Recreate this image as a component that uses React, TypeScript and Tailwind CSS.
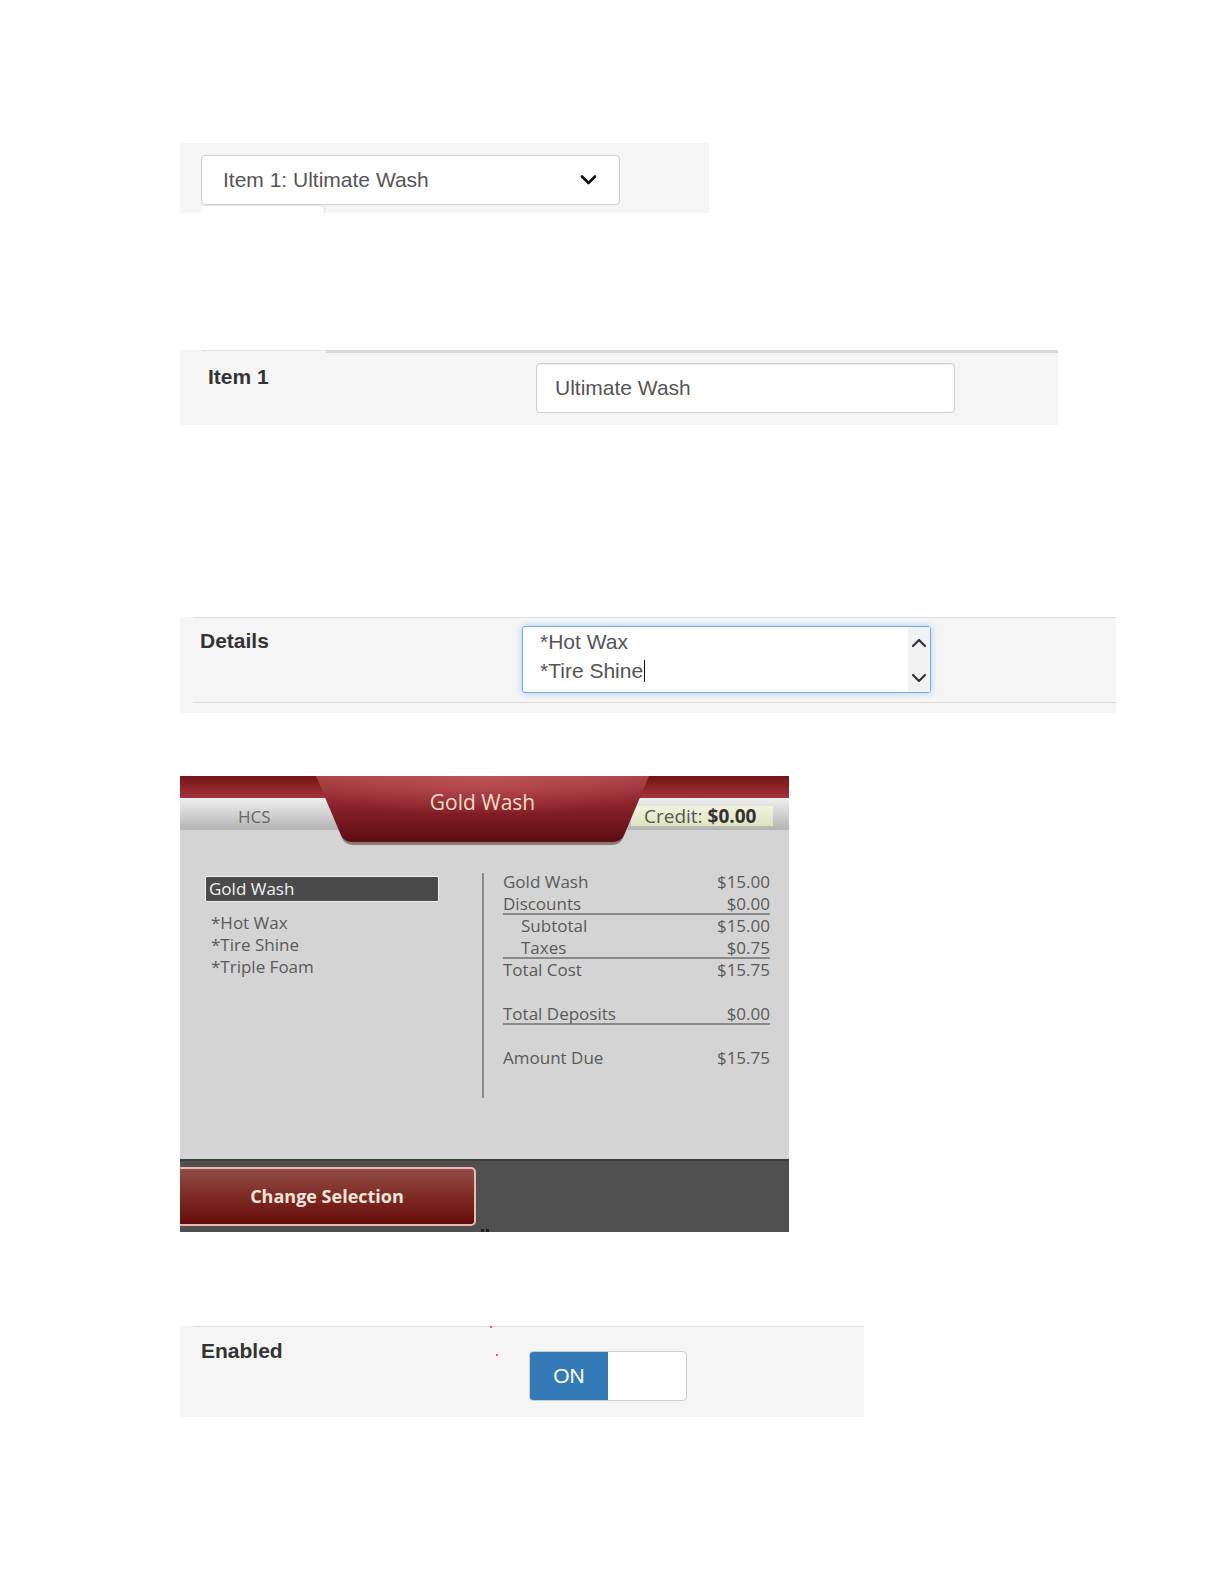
import React from 'react';

const formFont = { fontFamily: '"Liberation Sans", Arial, sans-serif' };
const kioskFont = { fontFamily: '"Open Sans", "DejaVu Sans", sans-serif' };

const SelectPanel = () => (
  <div className="h-[70px] w-[529px] bg-[#f5f5f5] pl-[21px] pt-[12px]" style={formFont}>
    <div className="flex h-[50px] w-[419px] items-center justify-between rounded-[4px] border border-[#cfcfcf] bg-white pl-[21px] pr-[22px] text-[21px] text-[#555]">
      <span>Item 1: Ultimate Wash</span>
      <svg width="17" height="12" viewBox="0 0 17 12" fill="none">
        <polyline points="2,2.5 8.5,9 15,2.5" stroke="#111" strokeWidth="2.6" strokeLinecap="round" strokeLinejoin="round" />
      </svg>
    </div>
    <div className="h-[8px] w-[124px] rounded-tr-[5px] border-r border-t border-[#e2e2e2] bg-white" />
  </div>
);

const NamePanel = () => (
  <div className="h-[75px] w-[878px] bg-[#f5f5f5]" style={formFont}>
    <div className="flex h-[3px]">
      <div className="w-[22px]" />
      <div className="h-px w-[124px] bg-[#e4e4e4]" />
      <div className="flex-1 bg-[#d9d9d9]" />
    </div>
    <div className="flex">
      <div className="w-[356px] pl-[28px] pt-[8px] text-[21px] font-bold text-[#333]">Item 1</div>
      <div className="mt-[10px] flex h-[50px] w-[419px] items-center rounded-[4px] border border-[#cfcfcf] bg-white pl-[18px] text-[21px] text-[#555] shadow-[inset_0_1px_1px_rgba(0,0,0,0.06)]">
        Ultimate Wash
      </div>
    </div>
  </div>
);

const Chevron = ({ up }: { up?: boolean }) => (
  <svg width="16" height="11" viewBox="0 0 16 11" fill="none">
    <polyline
      points={up ? '2,9 8,3 14,9' : '2,2 8,8 14,2'}
      stroke="#333"
      strokeWidth="2.2"
      strokeLinecap="round"
      strokeLinejoin="round"
    />
  </svg>
);

const DetailsPanel = () => (
  <div className="h-[96px] w-[936px] bg-[#f5f5f5]" style={formFont}>
    <div className="ml-[13px] h-px bg-[#dedede]" />
    <div className="flex h-[84px]">
      <div className="w-[342px] pl-[20px] pt-[7px] text-[21px] font-bold text-[#333]">Details</div>
      <div className="mt-[8px] flex h-[67px] w-[409px] rounded-[3px] border border-[#66afe9] bg-white shadow-[0_0_6px_rgba(102,175,233,0.55)]">
        <div className="flex-1 pl-[17px] text-[21px] leading-[29px] text-[#555]">
          <div>*Hot Wax</div>
          <div className="flex items-center">
            *Tire Shine
            <span className="ml-px inline-block h-[22px] w-px bg-[#111]" />
          </div>
        </div>
        <div className="flex w-[22px] flex-col items-center justify-between bg-[#f2f2f2] pb-[8px] pt-[10px]">
          <Chevron up />
          <Chevron />
        </div>
      </div>
    </div>
    <div className="ml-[13px] h-px bg-[#dedede]" />
  </div>
);

const Row = ({
  label,
  value,
  indent,
  line,
}: {
  label: string;
  value: string;
  indent?: boolean;
  line?: boolean;
}) => (
  <div
    className={`flex h-[22px] items-center justify-between leading-[22px] ${
      line ? 'shadow-[inset_0_-2px_0_#8a8a8a]' : ''
    }`}
  >
    <span className={indent ? 'pl-[18px]' : ''}>{label}</span>
    <span>{value}</span>
  </div>
);

const Kiosk = () => (
  <div className="flex h-[456px] w-[609px] flex-col bg-[#d4d4d4] text-[17px] text-[#5a5a5a]" style={kioskFont}>
    <div className="relative h-[54px]">
      <div className="h-[22px] bg-gradient-to-b from-[#6f1519] via-[#8e2228] to-[#a3353b]" />
      <div className="flex h-[32px] items-start justify-between bg-gradient-to-b from-[#efefef] via-[#d2d2d2] to-[#b3b3b3] pl-[58px] pr-[16px]">
        <span className="pt-[8px] leading-[22px] text-[#666]">HCS</span>
        <div className="mt-[8px] flex h-[20px] w-[142px] items-center bg-gradient-to-b from-[#f1f3de] to-[#dfe4c2] pl-[13px] text-[19px] leading-[20px] text-[#555]">
          Credit:&nbsp;<b className="text-[#333]">$0.00</b>
        </div>
      </div>
      <div className="absolute left-[136px] top-0 z-10 h-[70px] w-[333px]">
        <svg className="absolute inset-0" width="333" height="70" viewBox="0 0 333 70">
          <defs>
            <linearGradient id="trap" x1="0" y1="0" x2="0" y2="1">
              <stop offset="0" stopColor="#ad4148" />
              <stop offset="0.45" stopColor="#8a2229" />
              <stop offset="1" stopColor="#5c0c12" />
            </linearGradient>
            <radialGradient id="glow" cx="0.5" cy="0" r="0.6">
              <stop offset="0" stopColor="#c65a60" stopOpacity="0.7" />
              <stop offset="1" stopColor="#c65a60" stopOpacity="0" />
            </radialGradient>
          </defs>
          <path d="M1 2 L332 2 L307 62 Q304 69 296 69 L37 69 Q29 69 26 62 Z" fill="#3a0a0c" opacity="0.45" />
          <path d="M0 0 L333 0 L308 59 Q305 66 297 66 L36 66 Q28 66 25 59 Z" fill="url(#trap)" />
          <path d="M0 0 L333 0 L308 59 Q305 66 297 66 L36 66 Q28 66 25 59 Z" fill="url(#glow)" />
        </svg>
        <div className="relative pt-[12px] text-center text-[21px] leading-[28px] text-[#f3dcc6]">Gold Wash</div>
      </div>
    </div>

    <div className="flex h-[329px]">
      <div className="w-[302px] pl-[25px] pt-[46px]">
        <div className="flex h-[26px] w-[234px] items-center rounded-[2px] border border-[#f2f2f2] bg-[#4a4a4a] pl-[3px] leading-[22px] text-[#f1f1f1]">
          Gold Wash
        </div>
        <div className="mt-[10px] pl-[6px] leading-[22px]">
          <div>*Hot Wax</div>
          <div>*Tire Shine</div>
          <div>*Triple Foam</div>
        </div>
      </div>
      <div className="mt-[43px] h-[225px] w-[2px] bg-[#8c8c8c]" />
      <div className="flex-1 pl-[19px] pr-[19px] pt-[41px]">
        <Row label="Gold Wash" value="$15.00" />
        <Row label="Discounts" value="$0.00" line />
        <Row label="Subtotal" value="$15.00" indent />
        <Row label="Taxes" value="$0.75" indent line />
        <Row label="Total Cost" value="$15.75" />
        <div className="mt-[22px]">
          <Row label="Total Deposits" value="$0.00" line />
        </div>
        <div className="mt-[22px]">
          <Row label="Amount Due" value="$15.75" />
        </div>
      </div>
    </div>

    <div className="relative h-[73px] border-t-2 border-[#3e3e3e] bg-[#505050] pt-[6px]">
      <div className="flex h-[59px] w-[296px] items-center justify-center rounded-r-[5px] border-y-2 border-r-2 border-[#e9b9b4] bg-gradient-to-b from-[#914c45] via-[#7e2a24] to-[#650a0a] text-[18px] font-bold text-[#f6e7d8]">
        Change Selection
      </div>
      <div className="absolute left-[301px] top-[68px] flex gap-[2px]">
        <span className="h-[3px] w-[3px] bg-[#1e1e1e]" />
        <span className="h-[3px] w-[3px] bg-[#1e1e1e]" />
      </div>
    </div>
  </div>
);

const EnabledPanel = () => (
  <div className="relative h-[91px] w-[684px] bg-[#f5f5f5]" style={formFont}>
    <div className="ml-[13px] h-px bg-[#e0e0e0]" />
    <div className="flex">
      <div className="w-[349px] pl-[21px] pt-[8px] text-[21px] font-bold text-[#333]">Enabled</div>
      <div className="mt-[24px] flex h-[50px] w-[158px] overflow-hidden rounded-[4px] border border-[#cfcfcf] bg-white">
        <div className="flex w-[78px] items-center justify-center bg-[#337ab7] text-[21px] text-white">ON</div>
      </div>
    </div>
    <span className="absolute left-[310px] top-0 h-[2px] w-[2px] rounded-full bg-[#e02424]" />
    <span className="absolute left-[316px] top-[28px] h-[2px] w-[2px] rounded-full bg-[#e02424]" />
  </div>
);

export default function App() {
  return (
    <div className="min-h-[1584px] w-[1224px] bg-white pl-[180px] pt-[143px]">
      <SelectPanel />
      <div className="mt-[137px]">
        <NamePanel />
      </div>
      <div className="mt-[192px]">
        <DetailsPanel />
      </div>
      <div className="mt-[63px]">
        <Kiosk />
      </div>
      <div className="mt-[94px]">
        <EnabledPanel />
      </div>
    </div>
  );
}
